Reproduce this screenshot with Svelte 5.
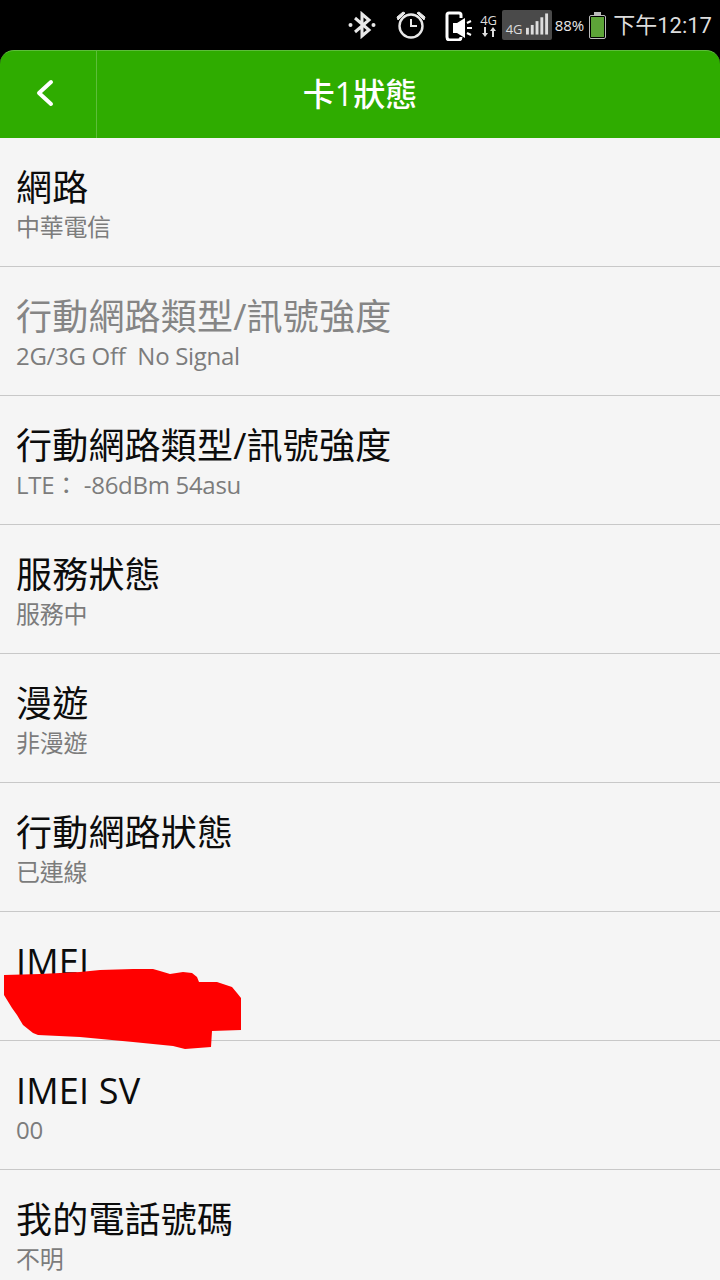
<script>
  const rows = [
    { title: '網路', sub: '中華電信' },
    { title: '行動網路類型/訊號強度', sub: '2G/3G Off  No Signal', off: true },
    { title: '行動網路類型/訊號強度', sub: 'LTE： -86dBm 54asu' },
    { title: '服務狀態', sub: '服務中' },
    { title: '漫遊', sub: '非漫遊' },
    { title: '行動網路狀態', sub: '已連線' },
    { title: 'IMEI', sub: '', redacted: true },
    { title: 'IMEI SV', sub: '00' },
    { title: '我的電話號碼', sub: '不明' }
  ];
  const bars = [
    [0, 7], [5, 10], [10, 14], [15, 18], [20, 22]
  ];
</script>

<div class="screen">
  <div class="statusbar">
    <svg class="bt" viewBox="0 0 28 28" width="28" height="28" fill="none" stroke="#e8e8e8" stroke-width="3">
      <path d="M7 7 L21 19 L14 25 V3 L21 9 L7 21" />
      <circle cx="2.5" cy="14" r="2" fill="#e8e8e8" stroke="none" />
      <circle cx="25.5" cy="14" r="2" fill="#e8e8e8" stroke="none" />
    </svg>
    <svg class="alarm" viewBox="0 0 32 30" width="32" height="30" fill="none" stroke="#e8e8e8">
      <circle cx="16" cy="16" r="11.5" stroke-width="2.4" />
      <path d="M16 9 V16 H22" stroke-width="2" />
      <path d="M2 7 L8 2 L10 3 L3 10 Z M30 7 L24 2 L22 3 L29 10 Z" fill="#e8e8e8" stroke-width="1" />
    </svg>
    <svg class="silent" viewBox="0 0 28 32" width="28" height="32" fill="none">
      <path d="M16 9 V6 Q16 4 14 4 H4 Q2 4 2 6 V28 Q2 31 5 31 H13 Q16 31 16 28" stroke="#fff" stroke-width="3" />
      <path d="M8 14 H12 L20 9 V29 L12 24 H8 Z" fill="#fff" />
      <path d="M22 14 L26 12 M22 19 H27 M22 24 L26 26" stroke="#fff" stroke-width="2" />
    </svg>
    <div class="net">
      <span>4G</span>
      <svg viewBox="0 0 16 10" width="16" height="10" fill="#ddd">
        <path d="M5 0 V6 H7 L4 10 L1 6 H3 V0 Z M11 10 V4 H9 L12 0 L15 4 H13 V10 Z" />
      </svg>
    </div>
    <div class="signal">
      <span>4G</span>
      <svg viewBox="0 0 24 22" width="23" height="22" fill="#ddd">
        {#each bars as [x, h]}
          <rect x={x} y={22 - h} width="3" height={h} />
        {/each}
      </svg>
    </div>
    <span class="pct">88%</span>
    <div class="battery"><div class="cap"></div><div class="cell"><div class="fill"></div></div></div>
    <span class="clock">下午12:17</span>
  </div>

  <header class="appbar">
    <button class="back" aria-label="back">
      <svg viewBox="0 0 20 30" width="20" height="30" fill="none" stroke="#fff" stroke-width="4" stroke-linecap="round" stroke-linejoin="round">
        <path d="M16 4 L4 15 L16 26" />
      </svg>
    </button>
    <h1>卡1狀態</h1>
  </header>

  <ul class="list">
    {#each rows as row}
      <li class:off={row.off}>
        <div class="title">{row.title}</div>
        <div class="sub">{row.sub}</div>
        {#if row.redacted}
          <svg class="scribble" viewBox="0 0 250 140" width="250" height="140">
            <path fill="#ff0000" d="M4 63 L40 62 L80 60 L100 58 L133 57 L153 57 L160 59 L170 62 L183 60 L192 61 L197 65 L199 70 L217 70 L232 75 L237 81 L241 86 L241 118 L212 119 L211 135 L185 137 L173 134 L133 130 L80 125 L38 123 L33 121 L23 113 L17 103 L12 96 L4 83 Z" />
          </svg>
        {/if}
      </li>
    {/each}
  </ul>
</div>

<style>
  :global(body) {
    margin: 0;
    background: #f5f5f5;
  }

  .screen {
    width: 720px;
    height: 1280px;
    overflow: hidden;
    background: #000;
    font-family: "Open Sans", "Noto Sans CJK TC", sans-serif;
  }

  .statusbar {
    height: 50px;
    display: flex;
    align-items: center;
    padding-right: 8px;
    justify-content: flex-end;
    color: #ddd;
  }

  .bt { margin-right: 19px; }
  .alarm { margin-right: 18px; }
  .silent { margin-right: 6px; }

  .net {
    width: 20px;
    display: flex;
    flex-direction: column;
    align-items: center;
    margin-right: 3px;
    font-size: 13px;
    line-height: 14px;
  }

  .signal {
    width: 50px;
    height: 30px;
    box-sizing: border-box;
    background: #4a4a4a;
    border-radius: 2px;
    display: flex;
    align-items: flex-end;
    justify-content: space-between;
    padding: 0 3px 3px 4px;
    margin-right: 3px;
    font-size: 13px;
    line-height: 15px;
  }

  .signal svg {
    margin-bottom: 2px;
  }

  .pct {
    font-size: 15px;
    color: #e8e8e8;
    margin-right: 5px;
  }

  .battery {
    width: 17px;
    margin-right: 7px;
    display: flex;
    flex-direction: column;
    align-items: center;
  }

  .cap {
    width: 7px;
    height: 3px;
    background: #bbb;
  }

  .cell {
    width: 17px;
    height: 24px;
    box-sizing: border-box;
    border: 1px solid #bbb;
    border-radius: 2px;
    padding: 1px;
  }

  .fill {
    height: 100%;
    background: #5da438;
  }

  .clock {
    margin-bottom: 4px;
    font-size: 22px;
    font-family: "Roboto", "Noto Sans CJK TC", sans-serif;
  }

  .appbar {
    height: 88px;
    box-sizing: border-box;
    position: relative;
    background: #2fac00;
    border-top: 1px solid #5dbd3a;
    border-radius: 14px 14px 0 0;
    padding-bottom: 6px;
    display: flex;
    align-items: center;
    justify-content: center;
  }

  .back {
    position: absolute;
    left: 0;
    top: 0;
    bottom: 0;
    width: 97px;
    padding: 0 6px 0 0;
    box-sizing: border-box;
    background: none;
    border: 0;
    border-right: 1px solid #5dbd3a;
  }

  h1 {
    margin: 0;
    font-size: 32px;
    font-weight: 500;
    color: #fff;
  }

  .list {
    margin: 0;
    padding: 0;
    list-style: none;
    background: #f5f5f5;
  }

  li {
    position: relative;
    height: 129px;
    box-sizing: border-box;
    padding: 28px 16px 0;
    border-bottom: 1px solid #c8c8c8;
    color: #0c0c0c;
  }

  .title {
    font-size: 36px;
    line-height: 44px;
    height: 44px;
    letter-spacing: 0.2px;
  }

  .sub {
    margin-top: 1px;
    font-size: 24px;
    line-height: 32px;
    letter-spacing: -0.3px;
    color: #7c7c7c;
    white-space: pre;
  }

  .off .title {
    color: #858585;
  }

  .scribble {
    position: absolute;
    left: 0;
    top: 0;
  }
</style>
